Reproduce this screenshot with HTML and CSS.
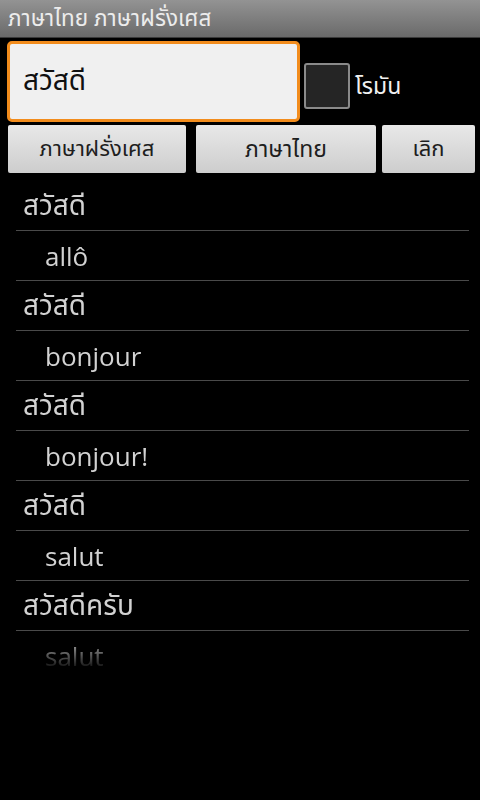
FILE: index.html
```html
<!DOCTYPE html>
<html lang="th">
<head>
<meta charset="utf-8">
<title>ภาษาไทย ภาษาฝรั่งเศส</title>
<link rel="stylesheet" href="styles.css">
</head>
<body>
<div class="screen">
  <header class="titlebar">ภาษาไทย ภาษาฝรั่งเศส</header>
  <div class="search-row">
    <div class="edit">สวัสดี</div>
    <div class="check"><span class="box"></span><span class="check-label">โรมัน</span></div>
  </div>
  <div class="buttons">
    <div class="btn btn-fr">ภาษาฝรั่งเศส</div>
    <div class="btn btn-th">ภาษาไทย</div>
    <div class="btn btn-cancel">เลิก</div>
  </div>
  <ul class="list">
    <li class="row head">สวัสดี</li>
    <li class="row sub">allô</li>
    <li class="row head">สวัสดี</li>
    <li class="row sub">bonjour</li>
    <li class="row head">สวัสดี</li>
    <li class="row sub">bonjour!</li>
    <li class="row head">สวัสดี</li>
    <li class="row sub">salut</li>
    <li class="row head">สวัสดีครับ</li>
    <li class="row sub">salut</li>
  </ul>
</div>
</body>
</html>
```
FILE: styles.css
```css
html, body {
  margin: 0;
  padding: 0;
  background: #000;
}
body {
  font-family: "Open Sans", "Noto Sans Thai", "Noto Sans", "DejaVu Sans", sans-serif;
}
.screen {
  width: 480px;
  height: 800px;
  background: #000;
  overflow: hidden;
}
.titlebar {
  height: 38px;
  box-sizing: border-box;
  padding-left: 8px;
  display: flex;
  align-items: center;
  background: linear-gradient(to bottom, #939393, #6a6a6a);
  border-bottom: 1px solid #3a3a3a;
  color: #ececec;
  font-size: 22.5px;
  white-space: nowrap;
}
.search-row {
  display: flex;
  align-items: center;
  margin-top: 3px;
  padding-left: 7px;
  height: 81px;
}
.edit {
  width: 293px;
  height: 81px;
  box-sizing: border-box;
  border: 3px solid #f28c1c;
  border-radius: 5px;
  background: #f0f0f0;
  color: #111;
  font-size: 28px;
  padding-left: 13px;
  display: flex;
  align-items: center;
}
.check {
  display: flex;
  align-items: center;
  margin-left: 4px;
  margin-top: 9px;
}
.box {
  width: 46px;
  height: 46px;
  box-sizing: border-box;
  border: 2px solid #8a8a8a;
  border-radius: 3px;
  background: #252525;
}
.check-label {
  margin-left: 5px;
  color: #f0f0f0;
  font-size: 23px;
}
.buttons {
  display: flex;
  margin-top: 3px;
  padding-left: 8px;
  height: 48px;
}
.btn {
  height: 48px;
  display: flex;
  align-items: center;
  justify-content: center;
  background: linear-gradient(to bottom, #e8e8e8, #cdcdcd);
  border-radius: 2px;
  color: #1e1e1e;
  font-size: 22px;
  white-space: nowrap;
}
.btn-fr { width: 178px; }
.btn-th { width: 180px; margin-left: 10px; font-size: 23px; }
.btn-cancel { width: 93px; margin-left: 6px; }
.list {
  list-style: none;
  margin: 8px 11px 0 16px;
  padding: 0;
  height: 500px;
  overflow: hidden;
  -webkit-mask-image: linear-gradient(to bottom, #000 calc(100% - 48px), transparent calc(100% - 10px));
  mask-image: linear-gradient(to bottom, #000 calc(100% - 48px), transparent calc(100% - 10px));
}
.row {
  height: 50px;
  box-sizing: border-box;
  border-bottom: 1px solid #4a4a4a;
  display: flex;
  align-items: center;
  color: #d2d2d2;
  white-space: nowrap;
}
.head { padding-left: 7px; font-size: 28px; padding-top: 2px; }
.sub { padding-left: 29px; font-size: 26px; }
```
